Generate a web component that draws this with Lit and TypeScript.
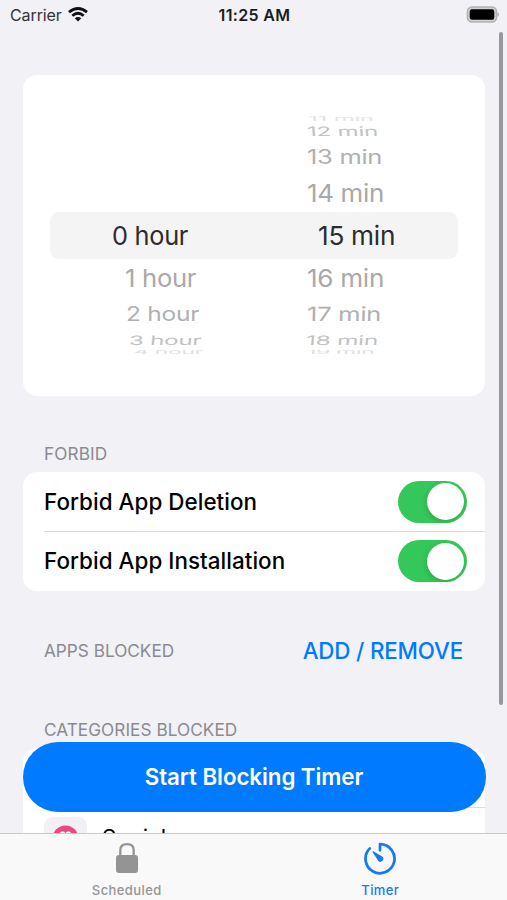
import { LitElement, html, css } from "lit";
import { customElement } from "lit/decorators.js";
import { styleMap } from "lit/directives/style-map.js";

interface WheelRow {
  text: string;
  height: number;
  left: number;
  sx: number;
  sy: number;
  skew: number;
  color: string;
}

const row = (
  text: string, height: number, left: number, sx: number, sy: number, skew: number, color: string
): WheelRow => ({ text, height, left, sx, sy, skew, color });

const HOURS: WheelRow[] = [
  row("", 96.5, 0, 1, 1, 0, "#fff"),
  row("0 hour", 46, 61, 0.975, 1, 0, "#2c2c2c"),
  row("1 hour", 39, 74, 0.985, 0.95, 0, "#a9a9a9"),
  row("2 hour", 33, 75, 0.945, 0.75, 0, "#b0b0b0"),
  row("3 hour", 19, 78, 0.93, 0.5, -3, "#c2c2c2"),
  row("4 hour", 5, 83, 0.88, 0.26, -2, "#e0e0e0"),
];

const MINUTES: WheelRow[] = [
  row("11 min", 5, 56, 0.93, 0.26, 0, "#e4e4e4"),
  row("12 min", 19, 55, 0.93, 0.5, 2, "#c2c2c2"),
  row("13 min", 33, 55, 0.98, 0.75, 0, "#b0b0b0"),
  row("14 min", 39.5, 55, 0.995, 0.95, 0, "#a9a9a9"),
  row("15 min", 46, 65.5, 1.01, 1, 0, "#2c2c2c"),
  row("16 min", 39, 55, 1.005, 0.95, 0, "#a9a9a9"),
  row("17 min", 33, 55, 0.985, 0.75, -1, "#b0b0b0"),
  row("18 min", 19, 54, 0.94, 0.5, -3, "#c2c2c2"),
  row("19 min", 5, 55, 0.88, 0.26, -2, "#e0e0e0"),
];

@customElement("wheel-column")
class WheelColumn extends LitElement {
  static properties = { rows: { attribute: false } };
  declare rows: WheelRow[];
  static styles = css`
    :host { display: flex; flex-direction: column; height: 239px; overflow: hidden; }
    .row { display: flex; align-items: center; flex: none; overflow: visible; }
    .row.edge { overflow: hidden; }
    .text {
      font-size: 26px; line-height: 30px; white-space: nowrap;
      transform-origin: 0 50%; letter-spacing: -0.3px;
    }
  `;
  render() {
    return this.rows.map(r => html`
      <div class="row ${r.height < 10 ? "edge" : ""}"
        style=${styleMap({ height: `${r.height}px`, paddingLeft: `${r.left}px` })}>
        <span class="text" style=${styleMap({
          color: r.color,
          transform: `scale(${r.sx}, ${r.sy}) skewX(${r.skew}deg)`,
        })}>${r.text}</span>
      </div>`);
  }
}

@customElement("ios-switch")
class IosSwitch extends LitElement {
  static styles = css`
    :host {
      display: flex; justify-content: flex-end; box-sizing: border-box;
      width: 69px; height: 42px; padding: 2.5px; border-radius: 21px; background: #34c759;
    }
    .knob {
      width: 37px; height: 37px; border-radius: 50%; background: #fff;
      box-shadow: -1px 2px 5px rgba(0, 0, 0, 0.14);
    }
  `;
  render() {
    return html`<div class="knob"></div>`;
  }
}

@customElement("app-root")
class AppRoot extends LitElement {
  static styles = css`
    :host {
      display: flex; flex-direction: column; position: relative;
      width: 507px; height: 900px; overflow: hidden;
      background: #f1f1f6; color: #000;
      font-family: Inter, "Liberation Sans", sans-serif;
    }
    .status {
      flex: none; height: 30px; box-sizing: border-box; padding: 0 8px 0 10px;
      display: grid; grid-template-columns: 1fr auto 1fr; align-items: center;
      font-size: 16px; line-height: 20px;
    }
    .carrier { display: flex; align-items: center; gap: 6px; color: #333; letter-spacing: -0.1px; }
    .carrier svg { margin-bottom: 1px; }
    .time { font-weight: 600; font-size: 16px; letter-spacing: 0.35px; color: #1c1c1c; padding-bottom: 1px; }
    .battery { justify-self: end; margin-bottom: 1px; display: block; }
    .content {
      flex: 1; min-height: 0; overflow: hidden; padding: 45px 22px 0 23px;
      display: flex; flex-direction: column;
    }
    .card { background: #fff; border-radius: 14px; flex: none; }
    .picker {
      height: 321px; box-sizing: border-box; padding: 41px 27px 0 28px; position: relative;
    }
    .band {
      position: absolute; left: 27px; right: 27px; top: 137px; height: 47px;
      border-radius: 9px; background: #f4f4f4;
    }
    .wheels { position: relative; display: grid; grid-template-columns: 201px 1fr; }
    .header {
      flex: none; display: flex; align-items: center; justify-content: space-between;
      padding: 0 22px 0 21px; font-size: 17.2px; line-height: 22px; color: #8a8a8f;
    }
    .forbid { height: 38px; margin-top: 38px; padding-top: 1px; box-sizing: border-box; letter-spacing: 0.1px; }
    .apps { height: 36px; margin-top: 42px; }
    .categories { height: 24px; margin-top: 49px; letter-spacing: 0.05px; }
    .link { font-size: 22.3px; font-weight: 500; letter-spacing: -0.13px; color: #007aff; }
    .item {
      margin-left: 21px; height: 59px; box-sizing: border-box; padding-right: 18.5px;
      display: flex; align-items: center; justify-content: space-between;
      font-size: 22.4px; font-weight: 500; letter-spacing: 0.05px;
    }
    .item + .item { border-top: 1px solid #dcdcde; height: 60px; padding-bottom: 1px; }
    .item + .item .label { padding-bottom: 1px; }
    .list .item.social {
      justify-content: flex-start; gap: 15px; align-items: flex-start;
      height: 60px; font-weight: 400; padding-top: 9px;
    }
    .social .name { line-height: 41px; }
    .list .blank { height: 59px; }
    .list { margin-top: 6px; }
    .tile {
      width: 43px; height: 43px; border-radius: 9px; background: #f1f0f5;
      display: flex; align-items: center; justify-content: center;
    }
    .scrollbar {
      position: absolute; left: 499px; top: 32px; width: 4px; height: 673px;
      border-radius: 2px; background: #98979d;
    }
    .start {
      position: absolute; left: 22.5px; top: 742px; width: 463px; height: 70px;
      border-radius: 35px; background: #007aff; color: #fff;
      display: flex; align-items: center; justify-content: center;
      box-sizing: border-box; padding-bottom: 1px;
      font-size: 22.3px; font-weight: 600; letter-spacing: -0.05px;
    }
    .tabs {
      flex: none; height: 67px; box-sizing: border-box; border-top: 1px solid #c9c9cb;
      background: #f9f9fa; display: grid; grid-template-columns: 1fr 1fr;
    }
    .tab {
      display: flex; flex-direction: column; align-items: center; padding-top: 8px;
      color: #949494; font-size: 13px; font-weight: 500; line-height: 18px; letter-spacing: 0.4px;
    }
    .tab svg { display: block; margin-bottom: 6px; }
    .tab.active { color: #1479f2; }
  `;

  render() {
    return html`
      <div class="status">
        <div class="carrier">
          <span class="carrier-name">Carrier</span>
          <svg width="20" height="15" viewBox="0 0 20 15">
            <g fill="none" stroke="#111" stroke-width="2.8">
              <path d="M1 5.2 Q10 -2.2 19 5.2"></path>
              <path d="M4.3 8.7 Q10 3.9 15.7 8.7"></path>
            </g>
            <path d="M10 14.6 L6.8 11.3 Q10 8.7 13.2 11.3 Z" fill="#111"></path>
          </svg>
        </div>
        <div class="time">11:25 AM</div>
        <svg class="battery" width="33" height="17" viewBox="0 0 33 17">
          <rect x="1.5" y="1" width="29" height="15" rx="4.5" fill="#d2d2d5" stroke="#b2b2b5" stroke-width="1.6"></rect>
          <rect x="3.7" y="3.2" width="24.6" height="10.6" rx="2.2" fill="#000"></rect>
          <path d="M31.5 6.2 Q33 7 33 8.5 T31.5 10.8 Z" fill="#aaaaad"></path>
        </svg>
      </div>

      <div class="content">
        <div class="card picker">
          <div class="band"></div>
          <div class="wheels">
            <wheel-column .rows=${HOURS}></wheel-column>
            <wheel-column .rows=${MINUTES}></wheel-column>
          </div>
        </div>

        <div class="header forbid"><span>FORBID</span></div>
        <div class="card">
          <div class="item"><span class="label">Forbid App Deletion</span><ios-switch></ios-switch></div>
          <div class="item"><span class="label">Forbid App Installation</span><ios-switch></ios-switch></div>
        </div>

        <div class="header apps"><span>APPS BLOCKED</span><span class="link">ADD / REMOVE</span></div>

        <div class="header categories"><span>CATEGORIES BLOCKED</span></div>
        <div class="card list">
          <div class="item blank"></div>
          <div class="item social">
            <div class="tile">
              <svg width="27" height="27" viewBox="0 0 27 27">
                <circle cx="13.5" cy="13.5" r="13" fill="#ea4a80"></circle>
                <path d="M13.5 19 L7.8 12.5 Q6.6 7.2 10 6.6 Q12.5 6.2 13.5 8.5 Q14.5 6.2 17 6.6 Q20.4 7.2 19.2 12.5 Z" fill="#fff"></path>
              </svg>
            </div>
            <span class="name">Social</span>
          </div>
        </div>
      </div>

      <div class="tabs">
        <div class="tab">
          <svg width="24" height="33" viewBox="0 0 24 33">
            <path d="M5.3 14 V8.2 Q5.3 2.2 12 2.2 T18.7 8.2 V14" fill="none" stroke="#949494" stroke-width="2.3"></path>
            <rect x="1" y="13" width="22" height="18" rx="3" fill="#949494"></rect>
          </svg>
          <span>Scheduled</span>
        </div>
        <div class="tab active">
          <svg width="34" height="33" viewBox="0 0 34 33">
            <path d="M17 8.3 V2.2 A14.5 14.5 0 1 1 6.8 6.4" fill="none" stroke="#1479f2" stroke-width="2.7" stroke-linecap="round" stroke-linejoin="round"></path>
            <path d="M10 9.7 L19.3 15.2 A2.5 2.5 0 0 1 15.8 18.7 Z" fill="#1479f2" stroke="#1479f2" stroke-width="1.1" stroke-linejoin="round"></path>
          </svg>
          <span>Timer</span>
        </div>
      </div>

      <div class="scrollbar"></div>
      <div class="start">Start Blocking Timer</div>
    `;
  }
}
